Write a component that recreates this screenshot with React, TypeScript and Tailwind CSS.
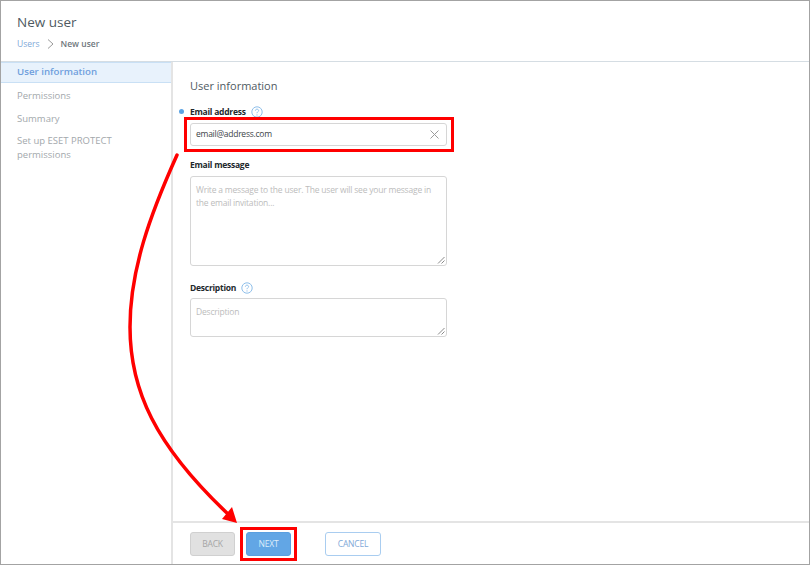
const FONT = { fontFamily: '"Open Sans", "Noto Sans", sans-serif' };

function HelpIcon() {
  return (
    <svg width="12" height="12" viewBox="0 0 12 12" className="shrink-0">
      <circle cx="6" cy="6" r="5.2" fill="none" stroke="#8fbfea" strokeWidth="1" />
      <path d="M4.4 4.7c0-1 .7-1.5 1.6-1.5s1.6.5 1.6 1.4c0 1.2-1.6 1.3-1.6 2.6" fill="none" stroke="#8fbfea" strokeWidth="1" />
      <circle cx="6" cy="8.9" r=".6" fill="#8fbfea" />
    </svg>
  );
}

function ResizeGrip() {
  return (
    <svg width="8" height="8" viewBox="0 0 8 8" className="absolute right-[1px] bottom-[1px]">
      <path d="M7.5 1 1 7.5M7.5 4.5 4.5 7.5" stroke="#8a8a8a" strokeWidth="1" />
    </svg>
  );
}

export default function App() {
  return (
    <div className="relative flex h-[565px] w-[810px] flex-col overflow-hidden border border-[#a3a3a3] bg-white" style={FONT}>
      <header className="h-[61px] shrink-0 border-b border-[#d5dde3] pl-[16px] pt-[11px]">
        <h1 className="text-[13.5px] leading-[20px] text-[#4f5a62]">New user</h1>
        <div className="mt-[5px] flex items-center text-[8.5px] leading-[14px]">
          <span className="text-[#7fa9d8]">Users</span>
          <svg width="8" height="10" viewBox="0 0 8 10" className="ml-[7px] mr-[6px]">
            <path d="M1 .5 6 5 1 9.5" fill="none" stroke="#9a9a9a" strokeWidth="1" />
          </svg>
          <span className="font-semibold text-[#6f777d]">New user</span>
        </div>
      </header>

      <div className="flex min-h-0 flex-1">
        <aside className="w-[172px] shrink-0 border-r-2 border-[#e4e4e4] text-[9.5px] text-[#a3a8ac]">
          <div className="flex h-[21px] items-center border-y border-[#c9e0f5] bg-[#e8f2fc] pl-[16px] text-[9.7px] font-semibold text-[#6f9fdc]">
            User information
          </div>
          <div className="pl-[16px]">
            <p className="mt-[5px] leading-[16px]">Permissions</p>
            <p className="mt-[7px] leading-[16px]">Summary</p>
            <p className="mt-[7px] w-[120px] leading-[14px]">Set up ESET PROTECT permissions</p>
          </div>
        </aside>

        <div className="flex min-w-0 flex-1 flex-col">
          <main className="flex-1 pl-[17px] pt-[16px]">
            <h2 className="text-[11px] leading-[16px] text-[#4f5a62]">User information</h2>

            <div className="relative mt-[11px] flex h-[14px] items-center gap-[5px]">
              <span className="absolute left-[-11px] top-[4px] h-[5px] w-[5px] rounded-full bg-[#5ba3e3]" />
              <span className="text-[8.5px] font-bold tracking-[-0.25px] text-[#22282c]">Email address</span>
              <HelpIcon />
            </div>
            <div className="mt-[4px] flex h-[23px] w-[257px] items-center justify-between rounded-[3px] border border-[#d6d6d6] pl-[5px] pr-[7px]">
              <span className="text-[8.5px] tracking-[-0.25px] text-[#3d4448]">email@address.com</span>
              <svg width="9" height="9" viewBox="0 0 9 9">
                <path d="M.5.5l8 8M8.5.5l-8 8" stroke="#9b9b9b" strokeWidth="1" />
              </svg>
            </div>

            <div className="mt-[12px] h-[14px] text-[8.5px] font-bold leading-[14px] tracking-[-0.25px] text-[#22282c]">Email message</div>
            <div className="relative mt-[4px] h-[90px] w-[257px] rounded-[3px] border border-[#d6d6d6] px-[5px] pt-[6px] text-[8.5px] leading-[13px] tracking-[-0.2px] text-[#bcbcbc]">
              Write a message to the user. The user will see your message in the email invitation...
              <ResizeGrip />
            </div>

            <div className="mt-[15px] flex h-[14px] items-center gap-[5px]">
              <span className="text-[8.5px] font-bold tracking-[-0.25px] text-[#22282c]">Description</span>
              <HelpIcon />
            </div>
            <div className="relative mt-[3px] h-[39px] w-[257px] rounded-[3px] border border-[#d6d6d6] px-[5px] pt-[6px] text-[8.5px] leading-[14px] tracking-[-0.2px] text-[#bcbcbc]">
              Description
              <ResizeGrip />
            </div>
          </main>

          <footer className="flex h-[43px] shrink-0 items-start border-t-2 border-[#e4e4e4] pl-[17px] pt-[9px] text-[8.5px] tracking-[-0.2px]">
            <button className="h-[24px] w-[45px] rounded-[3px] border border-[#d0d0d0] bg-[#e1e1e1] text-[#a5a5a5]">BACK</button>
            <button className="ml-[11px] h-[24px] w-[45px] rounded-[3px] border border-[#5a9fe0] bg-[#62a6e5] text-[#dcecfa]">NEXT</button>
            <button className="ml-[34px] h-[24px] w-[56px] rounded-[3px] border border-[#a9cdf0] bg-white text-[#7fa9d8]">CANCEL</button>
          </footer>
        </div>
      </div>

      {/* Annotation overlay */}
      <div className="absolute left-[183px] top-[116px] h-[35px] w-[270px] border-[3px] border-[#ff0000]" />
      <div className="absolute left-[239px] top-[526px] h-[34px] w-[57px] border-[3px] border-[#ff0000]" />
      <svg width="810" height="565" viewBox="0 0 810 565" className="pointer-events-none absolute left-[-1px] top-[-1px]">
        <path d="M177 155C150 215 130 270 130 327C130 390 155 445 228 514" fill="none" stroke="#ff0000" strokeWidth="3.5" strokeLinecap="round" />
        <path d="M237 523 222 519 232 507Z" fill="#ff0000" />
      </svg>
    </div>
  );
}
